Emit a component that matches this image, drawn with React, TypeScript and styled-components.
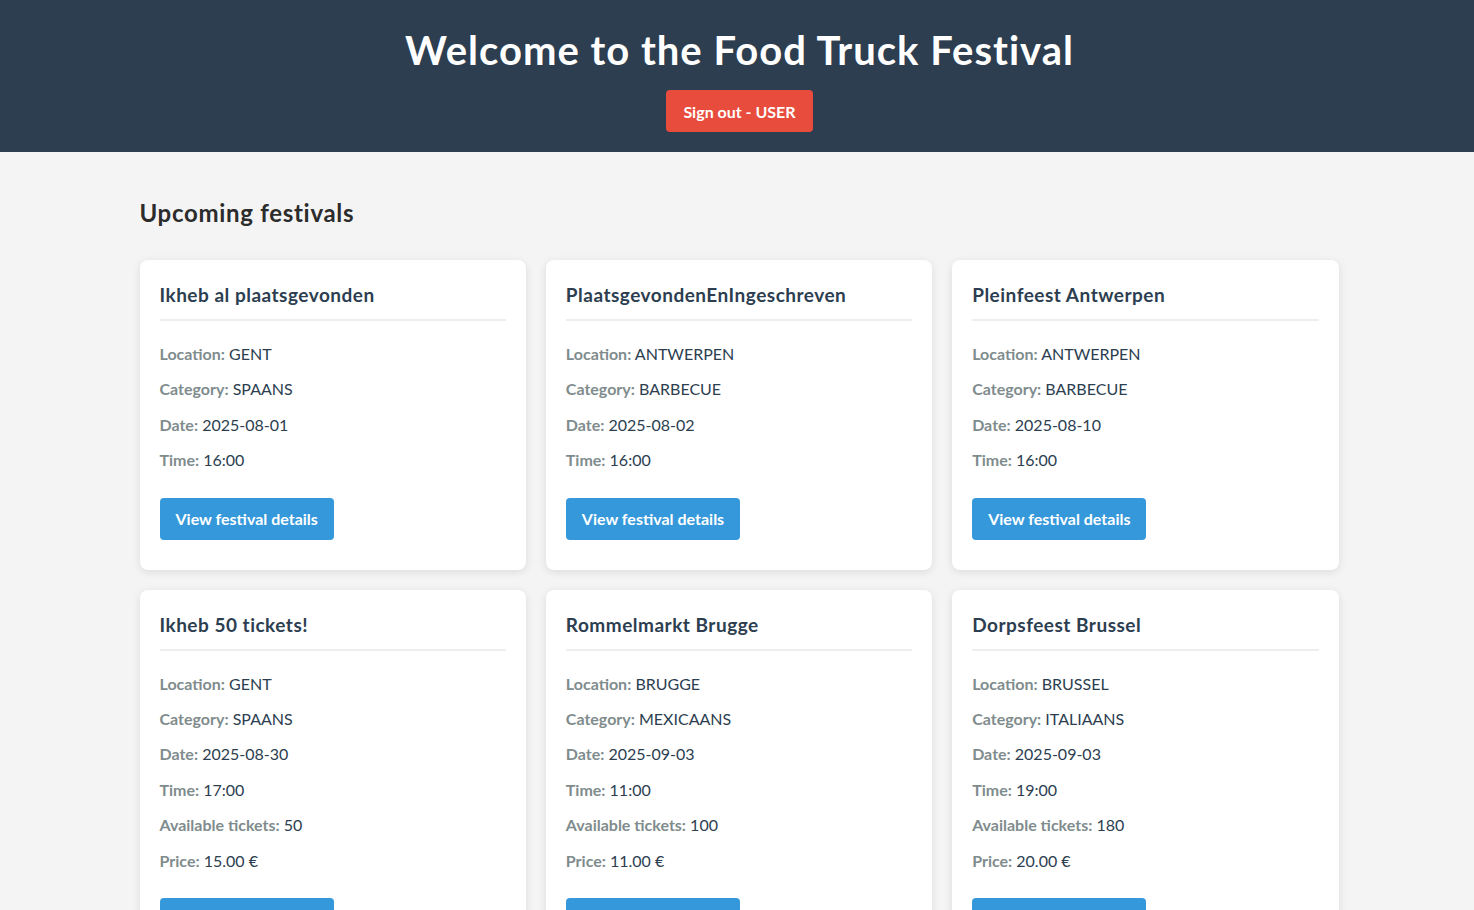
import React from "react";
import styled, { createGlobalStyle } from "styled-components";

const GlobalStyle = createGlobalStyle`
  html, body { margin: 0; padding: 0; }
  body {
    background: #f4f4f4;
    font-family: "Lato", "Open Sans", sans-serif;
    color: #333;
  }
  * { box-sizing: border-box; }
`;

const Header = styled.header`
  background: #2c3e50;
  color: #fff;
  text-align: center;
  padding: 25px 20px 20px;
  display: flex;
  flex-direction: column;
  align-items: center;
`;

const Title = styled.h1`
  margin: 0 0 0 5px;
  font-size: 40px;
  line-height: 50px;
  font-weight: 700;
  letter-spacing: 1px;
`;

const SignOut = styled.button`
  margin: 15px 0 0 5px;
  height: 42px;
  padding: 0 17px;
  background: #e74c3c;
  color: #fff;
  border: none;
  border-radius: 4px;
  font-family: inherit;
  font-size: 16px;
  font-weight: 700;
  cursor: pointer;
`;

const Main = styled.main`
  max-width: 1199px;
  margin: 0 auto;
  padding: 42px 0 0;
  transform: translateX(2px);
`;

const SectionTitle = styled.h2`
  margin: 0 0 28px;
  font-size: 24px;
  line-height: 38px;
  font-weight: 700;
  letter-spacing: 0.7px;
  color: #2c2c2c;
`;

const Grid = styled.div`
  display: grid;
  grid-template-columns: repeat(3, 1fr);
  gap: 20px;
`;

const Card = styled.div`
  background: #fff;
  border-radius: 8px;
  box-shadow: 0 2px 8px rgba(0, 0, 0, 0.1);
  padding: 20px 20px 30px;
`;

const CardTitle = styled.h3`
  margin: 0 0 15px;
  padding: 1px 0 11px;
  border-bottom: 2px solid #eeeeee;
  font-size: 19px;
  line-height: 27px;
  font-weight: 700;
  letter-spacing: 0.5px;
  color: #2c3e50;
`;

const Info = styled.p`
  margin: 0;
  font-size: 16px;
  line-height: 35.4px;
  color: #2c3e50;
`;

const Label = styled.strong`
  color: #7f8c8d;
  font-weight: 700;
`;

const DetailsButton = styled.button`
  margin-top: 20px;
  height: 42px;
  padding: 0 16px;
  background: #3498db;
  color: #fff;
  border: none;
  border-radius: 4px;
  font-family: inherit;
  font-size: 16px;
  font-weight: 700;
  cursor: pointer;
`;

type Festival = {
  name: string;
  location: string;
  category: string;
  date: string;
  time: string;
  tickets?: number;
  price?: string;
};

const festivals: Festival[] = [
  { name: "Ikheb al plaatsgevonden", location: "GENT", category: "SPAANS", date: "2025-08-01", time: "16:00" },
  { name: "PlaatsgevondenEnIngeschreven", location: "ANTWERPEN", category: "BARBECUE", date: "2025-08-02", time: "16:00" },
  { name: "Pleinfeest Antwerpen", location: "ANTWERPEN", category: "BARBECUE", date: "2025-08-10", time: "16:00" },
  { name: "Ikheb 50 tickets!", location: "GENT", category: "SPAANS", date: "2025-08-30", time: "17:00", tickets: 50, price: "15.00" },
  { name: "Rommelmarkt Brugge", location: "BRUGGE", category: "MEXICAANS", date: "2025-09-03", time: "11:00", tickets: 100, price: "11.00" },
  { name: "Dorpsfeest Brussel", location: "BRUSSEL", category: "ITALIAANS", date: "2025-09-03", time: "19:00", tickets: 180, price: "20.00" },
];

export default function App() {
  return (
    <>
      <GlobalStyle />
      <Header>
        <Title>Welcome to the Food Truck Festival</Title>
        <SignOut>Sign out - USER</SignOut>
      </Header>
      <Main>
        <SectionTitle>Upcoming festivals</SectionTitle>
        <Grid>
          {festivals.map((f) => (
            <Card key={f.name}>
              <CardTitle>{f.name}</CardTitle>
              <Info><Label>Location:</Label> {f.location}</Info>
              <Info><Label>Category:</Label> {f.category}</Info>
              <Info><Label>Date:</Label> {f.date}</Info>
              <Info><Label>Time:</Label> {f.time}</Info>
              {f.tickets !== undefined && (
                <Info><Label>Available tickets:</Label> {f.tickets}</Info>
              )}
              {f.price !== undefined && (
                <Info><Label>Price:</Label> {f.price} €</Info>
              )}
              <DetailsButton>View festival details</DetailsButton>
            </Card>
          ))}
        </Grid>
      </Main>
    </>
  );
}
